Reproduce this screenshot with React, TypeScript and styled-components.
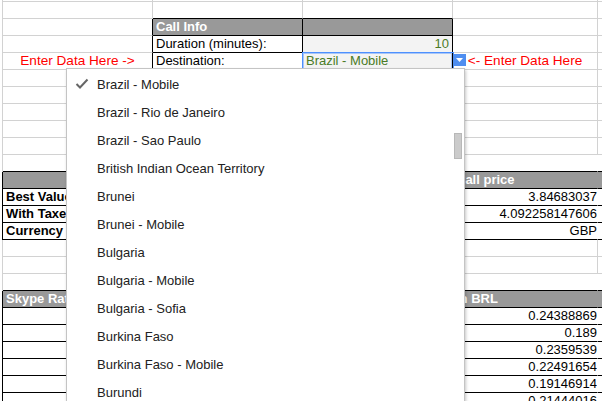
import React from 'react';
import styled, { createGlobalStyle } from 'styled-components';

const Global = createGlobalStyle`
  html, body { margin: 0; padding: 0; background: #fff; overflow: hidden; }
  body { font-family: Arial, "Liberation Sans", sans-serif; font-size: 13px; color: #000; }
`;

const G = '#d2d2d2';
const K = '#000';
const HEAD = '#999999';
const RED = '#ff0000';
const GREEN = '#4a7b26';
const WIDTHS = [150, 150, 150, 145];

type Cell = {
  t?: string;
  bg?: string;
  color?: string;
  bold?: boolean;
  align?: 'left' | 'right' | 'center';
  bb?: string;
  br?: string;
  size?: number;
  pr?: number;
  selected?: boolean;
};
type RowSpec = { left?: string; cells: Cell[] };

const Page = styled.div`
  position: relative;
  width: 602px;
  height: 401px;
  overflow: hidden;
`;

const Sheet = styled.div`
  display: flex;
  flex-direction: column;
  margin-top: -15px;
  padding-left: 2px;
`;

const Row = styled.div<{ $left: string }>`
  display: flex;
  height: 17px;
  border-left: 1px solid ${(p) => p.$left};
`;

const CellBox = styled.div<{
  $w?: number;
  $bg: string;
  $color: string;
  $bold: boolean;
  $align: string;
  $bb: string;
  $br: string;
  $size: number;
  $pr: number;
  $selected: boolean;
}>`
  position: relative;
  box-sizing: border-box;
  flex: ${(p) => (p.$w ? `0 0 ${p.$w}px` : '1 1 auto')};
  height: 17px;
  padding: 0 ${(p) => p.$pr}px 0 3px;
  background: ${(p) => p.$bg};
  color: ${(p) => p.$color};
  font-weight: ${(p) => (p.$bold ? 700 : 400)};
  font-size: ${(p) => p.$size}px;
  text-align: ${(p) => p.$align};
  line-height: 16px;
  white-space: nowrap;
  overflow: ${(p) => (p.$selected ? 'visible' : 'hidden')};
  border-right: 1px solid ${(p) => p.$br};
  border-bottom: 1px solid ${(p) => p.$bb};
  box-shadow: ${(p) =>
    p.$selected ? '0 0 0 1px #4d90fe, inset 0 0 0 1px rgba(77, 144, 254, 0.45)' : 'none'};
`;

const ArrowButton = styled.span`
  position: absolute;
  right: -14px;
  top: 1px;
  width: 13px;
  height: 12px;
  background: #4f8ef0;
  display: flex;
  align-items: center;
  justify-content: center;
`;

const Menu = styled.div`
  position: absolute;
  left: 66px;
  top: 68px;
  width: 399px;
  box-sizing: border-box;
  background: #fff;
  border: 1px solid #c4c4c4;
  box-shadow: 1px 2px 3px rgba(0, 0, 0, 0.22);
  padding-top: 1px;
  display: flex;
  flex-direction: column;
`;

const Item = styled.div`
  flex: 0 0 28px;
  display: flex;
  align-items: center;
  padding-left: 8px;
  font-size: 13px;
  color: #222;
  white-space: nowrap;
`;

const CheckSlot = styled.span`
  flex: 0 0 22px;
  display: flex;
  align-items: center;
`;

const Thumb = styled.div`
  position: absolute;
  right: 2px;
  top: 64px;
  width: 8px;
  height: 26px;
  box-sizing: border-box;
  background: #cbcbcb;
  border: 1px solid #b8b8b8;
`;

const row = (cells: Cell[], left = G): RowSpec => ({ left, cells });

const tableTop = (): RowSpec => row([{ bb: K }, { bb: K }, { bb: K }, { bb: K, br: 'transparent' }, { bb: K }]);
const header = (d: string): RowSpec =>
  row(
    [
      { bg: HEAD, bb: K, br: HEAD },
      { bg: HEAD, bb: K, br: HEAD },
      { bg: HEAD, bb: K, br: HEAD },
      { t: d, bg: HEAD, color: '#fff', bold: true, bb: K, br: HEAD },
      { bg: HEAD, bb: K },
    ],
    K
  );
const header2 = (a: string, d: string): RowSpec => {
  const r = header(d);
  r.cells[0] = { ...r.cells[0], t: a, color: '#fff', bold: true };
  return r;
};
const dataRow = (a: string, d: string): RowSpec =>
  row(
    [
      { t: a, bold: true, bb: K, br: K },
      { bb: K, br: K },
      { bb: K, br: K },
      { t: d, align: 'right', bb: K, br: 'transparent', pr: 0 },
      { bb: K },
    ],
    K
  );
const empty = (): RowSpec => row([{}, {}, {}, {}, {}]);

const ROWS: RowSpec[] = [
  empty(),
  row([{}, { bb: K }, { bb: K }, {}, {}]),
  row([
    { br: K },
    { t: 'Call Info', bg: HEAD, color: '#fff', bold: true, bb: K, br: K },
    { bg: HEAD, bb: K, br: K },
    {},
    {},
  ]),
  row([
    { br: K },
    { t: 'Duration (minutes):', bb: K, br: K },
    { t: '10', align: 'right', bg: '#f3f3f3', color: GREEN, bb: K, br: K },
    {},
    {},
  ]),
  row([
    { t: 'Enter Data Here ->', color: RED, align: 'center', br: K, size: 13.6 },
    { t: 'Destination:', bb: K, br: K },
    { t: 'Brazil - Mobile', bg: '#f3f3f3', color: GREEN, bb: K, br: K, selected: true },
    { t: '<- Enter Data Here', color: RED, align: 'center', size: 13.6 },
    {},
  ]),
  empty(),
  empty(),
  empty(),
  empty(),
  empty(),
  tableTop(),
  header('Call price'),
  dataRow('Best Value', '3.84683037'),
  dataRow('With Taxes', '4.092258147606'),
  dataRow('Currency', 'GBP'),
  empty(),
  empty(),
  tableTop(),
  header2('Skype Rates', 'in BRL'),
  dataRow('', '0.24388869'),
  dataRow('', '0.189'),
  dataRow('', '0.2359539'),
  dataRow('', '0.22491654'),
  dataRow('', '0.19146914'),
  dataRow('', '0.21444016'),
];

const ITEMS = [
  'Brazil - Mobile',
  'Brazil - Rio de Janeiro',
  'Brazil - Sao Paulo',
  'British Indian Ocean Territory',
  'Brunei',
  'Brunei - Mobile',
  'Bulgaria',
  'Bulgaria - Mobile',
  'Bulgaria - Sofia',
  'Burkina Faso',
  'Burkina Faso - Mobile',
  'Burundi',
  'Cambodia',
];

export default function App() {
  return (
    <Page>
      <Global />
      <Sheet>
        {ROWS.map((r, ri) => (
          <Row key={ri} $left={r.left ?? G}>
            {r.cells.map((c, ci) => (
              <CellBox
                key={ci}
                $w={WIDTHS[ci]}
                $bg={c.bg ?? 'transparent'}
                $color={c.color ?? '#000'}
                $bold={!!c.bold}
                $align={c.align ?? 'left'}
                $bb={c.bb ?? G}
                $br={c.br ?? G}
                $size={c.size ?? 13}
                $pr={c.pr ?? 3}
                $selected={!!c.selected}
              >
                {c.t}
                {c.selected && (
                  <ArrowButton>
                    <svg width="7" height="4" viewBox="0 0 7 4">
                      <path d="M0 0 L7 0 L3.5 4 Z" fill="#fff" />
                    </svg>
                  </ArrowButton>
                )}
              </CellBox>
            ))}
          </Row>
        ))}
      </Sheet>
      <Menu>
        {ITEMS.map((it, i) => (
          <Item key={it}>
            <CheckSlot>
              {i === 0 && (
                <svg width="14" height="12" viewBox="0 0 14 12">
                  <path d="M1.5 6 L5 9.5 L12.5 1.5" fill="none" stroke="#666" strokeWidth="2" />
                </svg>
              )}
            </CheckSlot>
            {it}
          </Item>
        ))}
        <Thumb />
      </Menu>
    </Page>
  );
}
